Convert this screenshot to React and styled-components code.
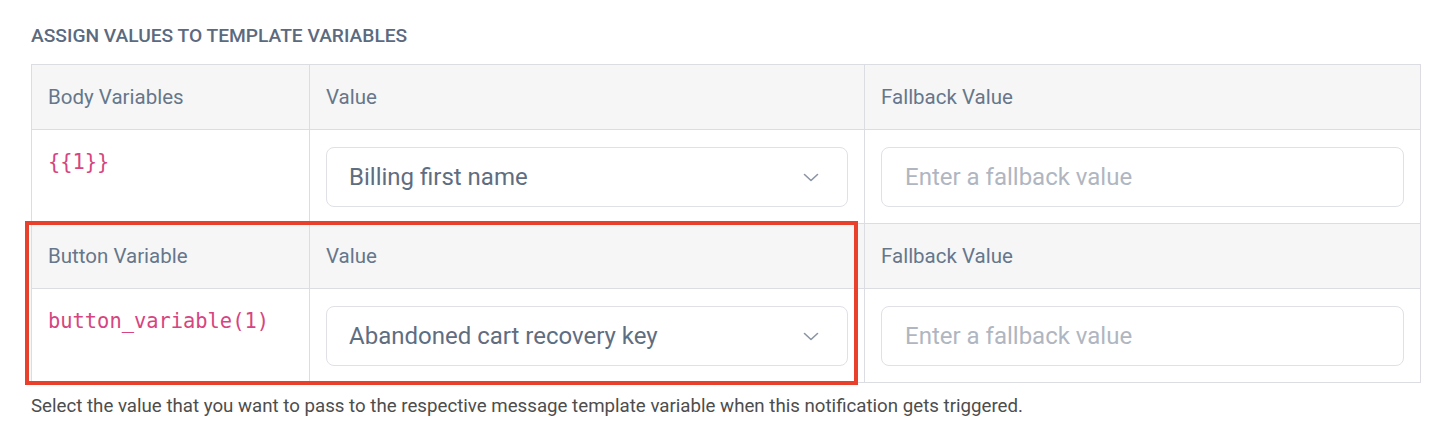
import React from "react";
import styled, { createGlobalStyle } from "styled-components";

const Global = createGlobalStyle`
  html, body { margin: 0; padding: 0; background: #ffffff; }
  body { font-family: Roboto, "Noto Sans", Arial, sans-serif; }
`;

const Page = styled.div`
  padding: 24px 0 0 31px;
  width: 1390px;
`;

const Title = styled.h2`
  margin: 0 0 16px;
  font-size: 19.2px;
  line-height: 24px;
  font-weight: 500;
  color: #5b6a7e;
  text-transform: uppercase;
`;

const TableWrap = styled.div`
  position: relative;
`;

const Grid = styled.div`
  display: grid;
  grid-template-columns: 278px 555px 556px;
  border-left: 1px solid #dcdde2;
  border-top: 1px solid #dcdde2;
`;

const HeadCell = styled.div`
  height: 65px;
  box-sizing: border-box;
  display: flex;
  align-items: center;
  padding: 0 16px;
  background: #f6f6f6;
  border-right: 1px solid #dcdde2;
  border-bottom: 1px solid #dcdde2;
  font-size: 20.5px;
  color: #66768b;
`;

const Cell = styled.div`
  height: 94px;
  box-sizing: border-box;
  padding: 17px 16px 0 16px;
  border-right: 1px solid #dcdde2;
  border-bottom: 1px solid #dcdde2;
  background: #fff;
`;

const Code = styled.code`
  display: block;
  margin-top: 3px;
  font-family: "DejaVu Sans Mono", "Liberation Mono", monospace;
  font-size: 20.4px;
  line-height: 24px;
  color: #d6457f;
`;

const Select = styled.div`
  height: 60px;
  box-sizing: border-box;
  border: 1px solid #dfe1e6;
  border-radius: 8px;
  display: flex;
  align-items: center;
  justify-content: space-between;
  padding: 0 27px 0 22px;
  font-size: 24px;
  color: #5f6d81;
  background: #fff;
`;

const Input = styled.div`
  height: 60px;
  box-sizing: border-box;
  border: 1px solid #dfe1e6;
  border-radius: 8px;
  display: flex;
  align-items: center;
  padding: 0 23px;
  font-size: 24px;
  color: #b0b6c1;
  background: #fff;
`;

const Chevron = styled.svg`
  width: 18px;
  height: 18px;
  flex: none;
`;

const Highlight = styled.div`
  position: absolute;
  left: -6px;
  top: 157px;
  width: 833px;
  height: 164px;
  box-sizing: border-box;
  border: 4px solid #e8402b;
  pointer-events: none;
`;

const Note = styled.p`
  margin: 11px 0 0;
  font-size: 18.7px;
  line-height: 24px;
  color: #4d4d4d;
`;

const Arrow = () => (
  <Chevron viewBox="0 0 18 18" fill="none">
    <path d="M2.5 6.5l6.5 6 6.5-6" stroke="#8a94a3" strokeWidth="1.6" strokeLinecap="round" strokeLinejoin="round" />
  </Chevron>
);

const sections = [
  { label: "Body Variables", code: "{{1}}", value: "Billing first name" },
  { label: "Button Variable", code: "button_variable(1)", value: "Abandoned cart recovery key" },
];

export default function App() {
  return (
    <>
      <Global />
      <Page>
        <Title>Assign values to template variables</Title>
        <TableWrap>
          <Grid>
            {sections.map((s) => (
              <React.Fragment key={s.label}>
                <HeadCell>{s.label}</HeadCell>
                <HeadCell>Value</HeadCell>
                <HeadCell>Fallback Value</HeadCell>
                <Cell>
                  <Code>{s.code}</Code>
                </Cell>
                <Cell>
                  <Select>
                    <span>{s.value}</span>
                    <Arrow />
                  </Select>
                </Cell>
                <Cell>
                  <Input>Enter a fallback value</Input>
                </Cell>
              </React.Fragment>
            ))}
          </Grid>
          <Highlight />
        </TableWrap>
        <Note>
          Select the value that you want to pass to the respective message template variable when this notification gets triggered.
        </Note>
      </Page>
    </>
  );
}
